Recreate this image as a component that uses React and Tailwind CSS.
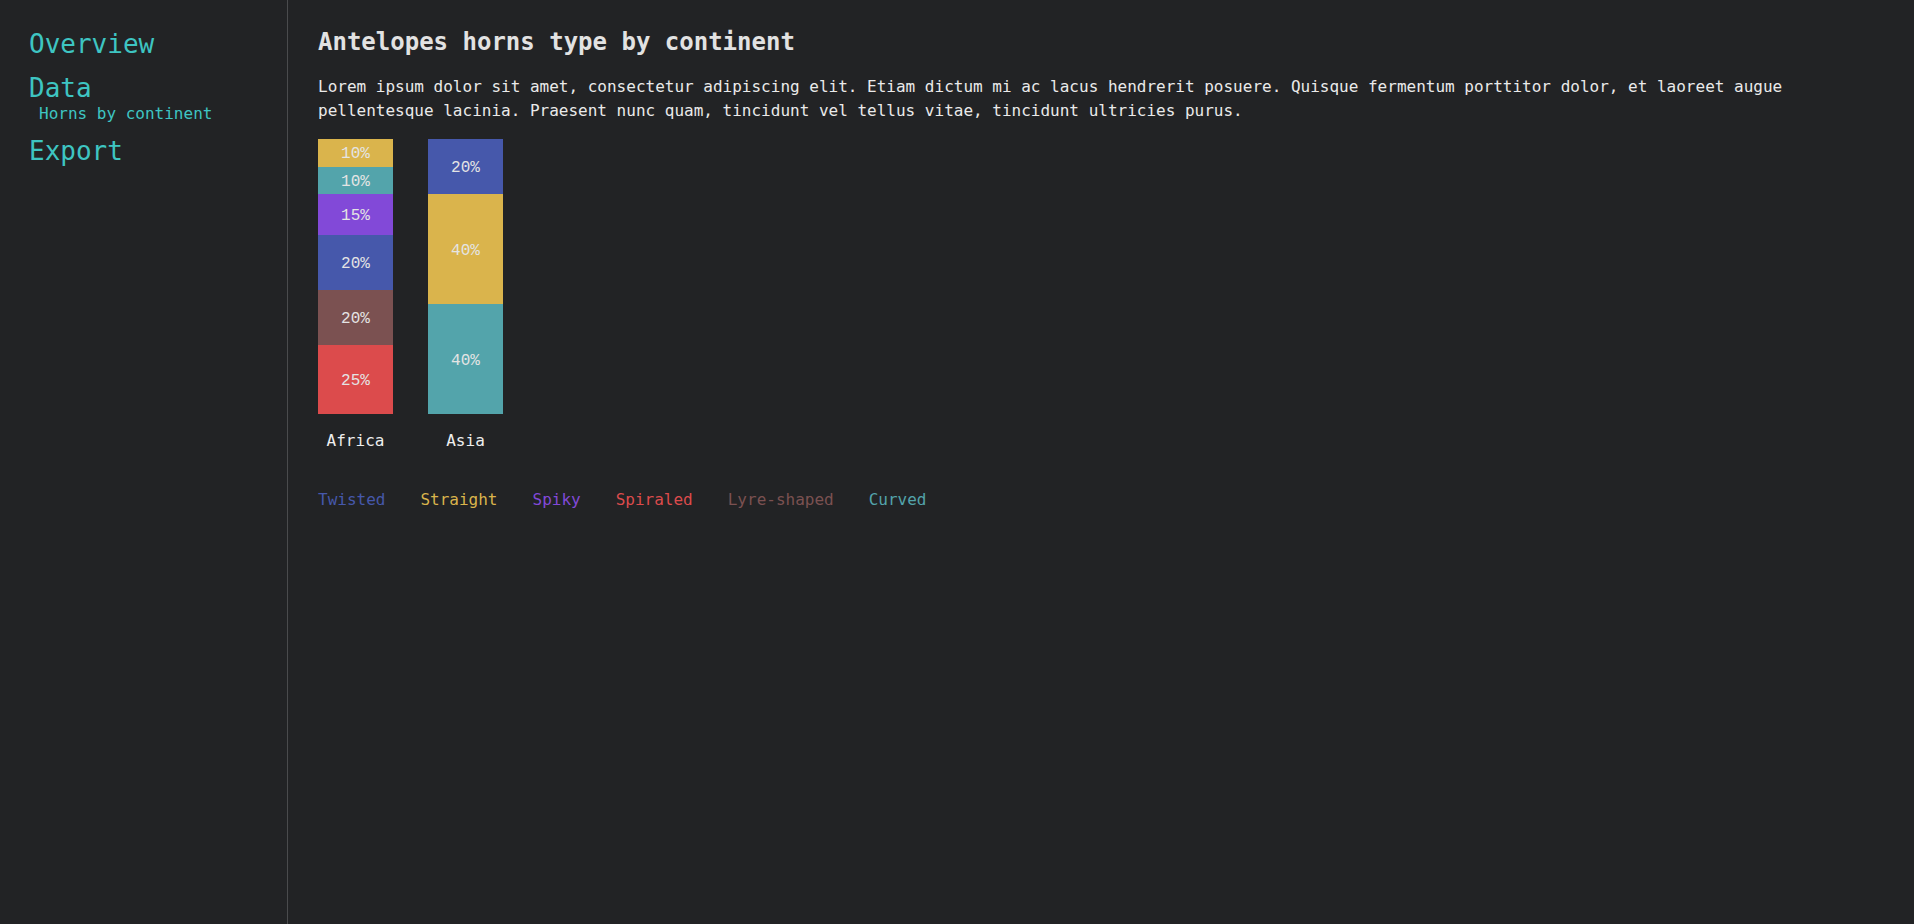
const mono = { fontFamily: '"DejaVu Sans Mono", "Liberation Mono", monospace' };

const COLORS = {
  Twisted: "#4658ab",
  Straight: "#dab44c",
  Spiky: "#8249d8",
  Spiraled: "#dc4b4c",
  "Lyre-shaped": "#7b5151",
  Curved: "#53a4ab",
};

const data = [
  {
    name: "Africa",
    parts: [
      ["Straight", 10],
      ["Curved", 10],
      ["Spiky", 15],
      ["Twisted", 20],
      ["Lyre-shaped", 20],
      ["Spiraled", 25],
    ],
  },
  {
    name: "Asia",
    parts: [
      ["Twisted", 20],
      ["Straight", 40],
      ["Curved", 40],
    ],
  },
];

const BAR_H = 275;

function Bar({ name, parts }) {
  return (
    <div className="flex flex-col items-center w-[75px]">
      <div className="flex flex-col w-[75px] h-[275px]">
        {parts.map(([type, pct]) => (
          <div
            key={type}
            className="flex items-center justify-center pt-[3px] text-[16px] text-[#e4e4e4]"
            style={{
              height: (BAR_H * pct) / 100,
              backgroundColor: COLORS[type],
              fontFamily: '"Liberation Mono", monospace',
            }}
          >
            {pct}%
          </div>
        ))}
      </div>
      <div className="mt-[15px] text-[16px] leading-[24px] text-[#eeeeee]">{name}</div>
    </div>
  );
}

export default function App() {
  return (
    <div className="min-h-screen flex bg-[#222325]" style={mono}>
      <nav className="w-[288px] shrink-0 border-r border-[#4a4b4d] pl-[29px] pt-[26px]">
        <div className="text-[26px] leading-[36px] text-[#3ec5c2]">Overview</div>
        <div className="mt-[8px] text-[26px] leading-[36px] text-[#3ec5c2]">Data</div>
        <div className="pl-[10px] text-[16px] leading-[16px] text-[#3ec5c2]">Horns by continent</div>
        <div className="mt-[11px] text-[26px] leading-[36px] text-[#3ec5c2]">Export</div>
      </nav>
      <main className="flex-1 pl-[30px] pr-[40px] pt-[26px]">
        <h1 className="text-[24px] leading-[32px] font-bold text-[#e2e2e2]">Antelopes horns type by continent</h1>
        <p className="mt-[17px] text-[16px] leading-[24px] text-[#eaeaea] max-w-[1470px]">
          Lorem ipsum dolor sit amet, consectetur adipiscing elit. Etiam dictum mi ac lacus hendrerit posuere. Quisque fermentum porttitor dolor, et laoreet augue pellentesque lacinia. Praesent nunc quam, tincidunt vel tellus vitae, tincidunt ultricies purus.
        </p>
        <div className="mt-[16px] flex gap-[35px]">
          {data.map((d) => (
            <Bar key={d.name} {...d} />
          ))}
        </div>
        <div className="mt-[35px] flex gap-[35px] text-[16px] leading-[24px]">
          {Object.entries(COLORS).map(([k, c]) => (
            <span key={k} style={{ color: c }}>{k}</span>
          ))}
        </div>
      </main>
    </div>
  );
}
